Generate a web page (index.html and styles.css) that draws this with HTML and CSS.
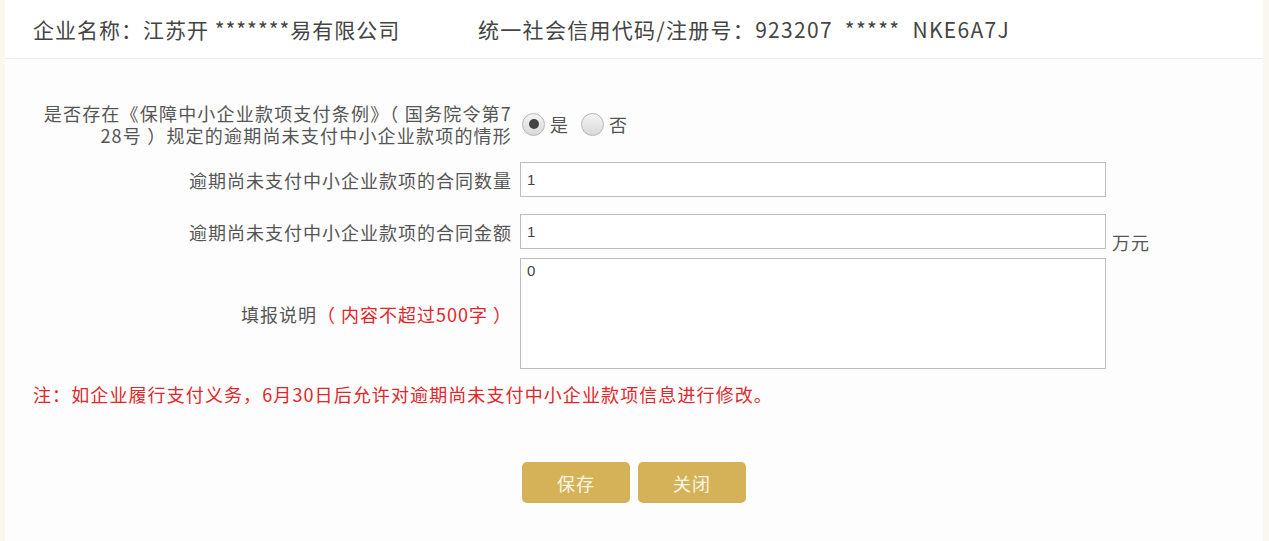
FILE: index.html
```html
<!DOCTYPE html>
<html lang="zh-CN">
<head>
<meta charset="utf-8">
<title>逾期尚未支付中小企业款项</title>
<link rel="stylesheet" href="styles.css">
</head>
<body>
<div class="panel">
  <div class="header">
    <span class="hd-name">企业名称：江苏开 *******易有限公司</span>
    <span class="hd-code">统一社会信用代码/注册号：923207 &nbsp;***** &nbsp;NKE6A7J</span>
  </div>
  <div class="form">
    <div class="row row-radio">
      <div class="lbl">是否存在《保障中小企业款项支付条例》（ 国务院令第7<br>28号 ）规定的逾期尚未支付中小企业款项的情形</div>
      <div class="field radios">
        <span class="radio checked"></span><span class="rtext">是</span>
        <span class="radio"></span><span class="rtext">否</span>
      </div>
    </div>
    <div class="row row-count">
      <div class="lbl">逾期尚未支付中小企业款项的合同数量</div>
      <div class="field"><div class="input">1</div></div>
    </div>
    <div class="row row-amount">
      <div class="lbl">逾期尚未支付中小企业款项的合同金额</div>
      <div class="field"><div class="input">1</div><span class="unit">万元</span></div>
    </div>
    <div class="row row-desc">
      <div class="lbl">填报说明<span class="red">（ 内容不超过500字 ）</span></div>
      <div class="field"><div class="textarea">0</div></div>
    </div>
    <div class="note">注：如企业履行支付义务，6月30日后允许对逾期尚未支付中小企业款项信息进行修改。</div>
    <div class="buttons">
      <button class="btn">保存</button>
      <button class="btn">关闭</button>
    </div>
  </div>
</div>
</body>
</html>
```

FILE: styles.css
```css
html, body {
  margin: 0;
  padding: 0;
}
body {
  background: #f9f7ee;
  font-family: "Noto Sans CJK SC", "Noto Sans", sans-serif;
  color: #555;
  height: 541px;
  overflow: hidden;
}
.panel {
  margin: 0 6px 0 5px;
  background: #fff;
  height: 541px;
  display: flex;
  flex-direction: column;
}
.header {
  height: 59px;
  flex: none;
  border-bottom: 1px solid #ebebeb;
  display: flex;
  align-items: center;
  padding-left: 28px;
  font-size: 21px;
  letter-spacing: 1px;
  color: #444;
  box-sizing: border-box;
}
.hd-name {
  width: 445px;
}
.hd-code {
  letter-spacing: 1.3px;
}
.form {
  flex: 1;
  background: #fdfdfd;
  padding-top: 43px;
}
.row {
  display: flex;
  align-items: center;
}
.lbl {
  width: 507px;
  flex: none;
  text-align: right;
  font-size: 18px;
  letter-spacing: 1px;
  line-height: 22px;
  color: #555;
}
.field {
  margin-left: 8px;
  display: flex;
  align-items: flex-end;
}
.row-radio .lbl {
  letter-spacing: 1.2px;
}
.row-radio .field {
  align-items: center;
  margin-left: 10px;
}
.radio {
  width: 23px;
  height: 23px;
  border-radius: 50%;
  border: 1px solid #b5b5b5;
  background: linear-gradient(#f4f4f4, #d9d9d9);
  box-sizing: border-box;
  display: inline-flex;
  align-items: center;
  justify-content: center;
}
.radio.checked::after {
  content: "";
  width: 10px;
  height: 10px;
  border-radius: 50%;
  background: #444;
}
.rtext {
  font-size: 18px;
  margin: 0 13px 0 5px;
  color: #555;
}
.row-count {
  margin-top: 16px;
}
.row-amount {
  margin-top: 17px;
}
.row-desc {
  margin-top: 9px;
}
.input, .textarea {
  width: 586px;
  height: 35px;
  border: 1px solid #bdbdbd;
  box-sizing: border-box;
  background: #fff;
  font-family: "Liberation Sans", sans-serif;
  font-size: 15px;
  color: #444;
  padding: 8px 6px;
}
.textarea {
  height: 111px;
  padding-top: 3px;
}
.unit {
  font-size: 18px;
  letter-spacing: 1px;
  margin-left: 6px;
  line-height: 22px;
  margin-bottom: -4px;
}
.red {
  color: #e3262a;
}
.note {
  margin: 13px 0 0 28px;
  color: #e3262a;
  font-size: 18px;
  letter-spacing: 1.1px;
  line-height: 24px;
}
.buttons {
  margin-top: 56px;
  display: flex;
  justify-content: center;
  gap: 8px;
}
.btn {
  width: 108px;
  height: 41px;
  border: none;
  border-radius: 5px;
  background: #d5b158;
  color: #fdf6e4;
  font-family: "Noto Sans CJK SC", sans-serif;
  font-size: 18px;
  letter-spacing: 1px;
  padding: 0;
}
```
